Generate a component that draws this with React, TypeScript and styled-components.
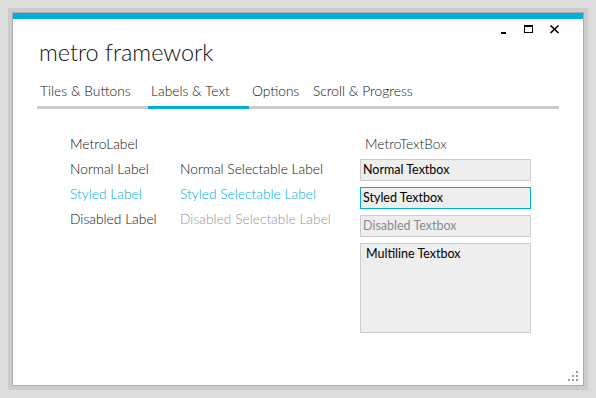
import React from "react";
import styled, { createGlobalStyle } from "styled-components";

const ACCENT = "#00aedb";

const Global = createGlobalStyle`
  html, body { margin: 0; padding: 0; background: #dcdcdc; }
  body { font-family: Lato, "Open Sans", sans-serif; }
  #root { width: 596px; height: 398px; overflow: hidden; }
`;

const Page = styled.div`
  width: 596px;
  height: 398px;
  padding: 12px;
  box-sizing: border-box;
`;

const Window = styled.div`
  position: relative;
  width: 572px;
  height: 374px;
  box-sizing: border-box;
  border: 1px solid #acacac;
  box-shadow: 0 0 0 4px #cccccc;
  background: #ffffff;
  display: flex;
  flex-direction: column;
`;

const AccentBar = styled.div`
  height: 6px;
  background: ${ACCENT};
  flex: none;
`;

const ControlRow = styled.div`
  height: 18px;
  display: flex;
  justify-content: flex-end;
  padding-right: 16px;
  flex: none;
`;

const ControlButton = styled.div`
  width: 25px;
  height: 18px;
  display: flex;
`;

const Title = styled.h1`
  margin: 0;
  padding: 1px 0 0 26px;
  font-family: Lato, "Open Sans", sans-serif;
  font-weight: 300;
  font-size: 23.4px;
  line-height: 1.2;
  color: #111111;
  flex: none;
`;

const TabStrip = styled.div`
  margin: 17px 24px 0 24px;
  display: flex;
  border-bottom: 3px solid #cccccc;
  flex: none;
`;

const Tab = styled.div<{ $w: number; $active?: boolean }>`
  width: ${(p) => p.$w}px;
  box-sizing: border-box;
  padding: 0 0 6px 3px;
  margin-bottom: -3px;
  border-bottom: 3px solid ${(p) => (p.$active ? ACCENT : "transparent")};
  font-family: Lato, "Open Sans", sans-serif;
  font-weight: 300;
  font-size: 13.8px;
  line-height: 1.2;
  color: #111111;
  white-space: nowrap;
`;

const Content = styled.div`
  display: flex;
  padding: 22px 0 0 57px;
`;

const LabelGrid = styled.div`
  width: 290px;
  display: grid;
  grid-template-columns: 110px auto;
  grid-auto-rows: 25px;
  align-content: start;
`;

const Label = styled.div<{ $tone?: "normal" | "styled" | "disabled" }>`
  font-family: Lato, "Open Sans", sans-serif;
  font-weight: 300;
  font-size: 13.8px;
  line-height: 25px;
  white-space: nowrap;
  color: ${(p) =>
    p.$tone === "styled" ? ACCENT : p.$tone === "disabled" ? "#959595" : "#111111"};
`;

const HeaderLabel = styled(Label)`
  grid-column: 1 / span 2;
`;

const TextColumn = styled.div`
  width: 171px;
  display: flex;
  flex-direction: column;
`;

const TextHeader = styled(Label)`
  padding-left: 5px;
  color: #222222;
  margin-bottom: 3px;
`;

const Boxes = styled.div`
  display: flex;
  flex-direction: column;
  gap: 6px;
`;

const TextBox = styled.div<{ $styled?: boolean; $disabled?: boolean; $multi?: boolean }>`
  box-sizing: border-box;
  height: ${(p) => (p.$multi ? 90 : 22)}px;
  border: 1px solid ${(p) => (p.$styled ? ACCENT : "#cccccc")};
  background: #eeeeee;
  padding: ${(p) => (p.$multi ? "0 0 0 5px" : "0 0 0 2px")};
  font-family: Lato, "Open Sans", sans-serif;
  font-weight: 400;
  font-size: 12.5px;
  line-height: 20px;
  color: ${(p) => (p.$disabled ? "#8a8a8a" : "#000000")};
  white-space: nowrap;
`;

const Grip = styled.svg`
  position: absolute;
  right: 4px;
  bottom: 3px;
`;

const MinIcon = () => (
  <svg width="25" height="18" viewBox="0 0 25 18">
    <rect x="9" y="13" width="5" height="2" fill="#000" />
  </svg>
);

const MaxIcon = () => (
  <svg width="25" height="18" viewBox="0 0 25 18">
    <path d="M7 6h9v8h-9z M8 8h7v5h-7z" fill="#000" fillRule="evenodd" />
  </svg>
);

const CloseIcon = () => (
  <svg width="25" height="18" viewBox="0 0 25 18">
    <path d="M8.5 6.5 L16.5 14 M16.5 6.5 L8.5 14" stroke="#000" strokeWidth="1.7" fill="none" />
  </svg>
);

const tabs = [
  { label: "Tiles & Buttons", w: 111 },
  { label: "Labels & Text", w: 101, active: true },
  { label: "Options", w: 61 },
  { label: "Scroll & Progress", w: 120 },
];

export default function App() {
  return (
    <>
      <Global />
      <Page>
        <Window>
          <AccentBar />
          <ControlRow>
            <ControlButton><MinIcon /></ControlButton>
            <ControlButton><MaxIcon /></ControlButton>
            <ControlButton><CloseIcon /></ControlButton>
          </ControlRow>
          <Title>metro framework</Title>
          <TabStrip>
            {tabs.map((t) => (
              <Tab key={t.label} $w={t.w} $active={t.active}>
                {t.label}
              </Tab>
            ))}
          </TabStrip>
          <Content>
            <LabelGrid>
              <HeaderLabel>MetroLabel</HeaderLabel>
              <Label>Normal Label</Label>
              <Label>Normal Selectable Label</Label>
              <Label $tone="styled">Styled Label</Label>
              <Label $tone="styled">Styled Selectable Label</Label>
              <Label>Disabled Label</Label>
              <Label $tone="disabled">Disabled Selectable Label</Label>
            </LabelGrid>
            <TextColumn>
              <TextHeader>MetroTextBox</TextHeader>
              <Boxes>
                <TextBox>Normal Textbox</TextBox>
                <TextBox $styled>Styled Textbox</TextBox>
                <TextBox $disabled>Disabled Textbox</TextBox>
                <TextBox $multi>Multiline Textbox</TextBox>
              </Boxes>
            </TextColumn>
          </Content>
          <Grip width="12" height="12" viewBox="0 0 12 12">
            <rect x="9" y="1" width="2" height="2" fill="#999" />
            <rect x="5" y="5" width="2" height="2" fill="#999" />
            <rect x="9" y="5" width="2" height="2" fill="#999" />
            <rect x="1" y="9" width="2" height="2" fill="#999" />
            <rect x="5" y="9" width="2" height="2" fill="#999" />
            <rect x="9" y="9" width="2" height="2" fill="#999" />
          </Grip>
        </Window>
      </Page>
    </>
  );
}
